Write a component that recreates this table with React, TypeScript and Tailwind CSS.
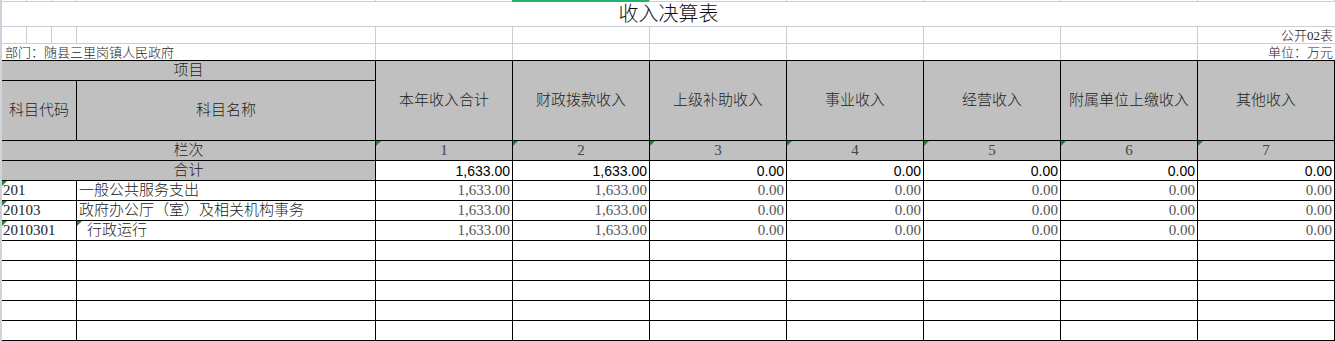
import React from "react";

const GRID = "border-[#c8cdd8]";
const FONT = "font-['Liberation_Serif','Noto_Sans_CJK_SC',serif]";
const NUM7 = [0, 1, 2, 3, 4, 5, 6];

function Tri() {
  return (
    <svg className="absolute left-0 top-0" width="5" height="5" viewBox="0 0 5 5">
      <polygon points="0,0 5,0 0,5" fill="#1f8a2a" />
    </svg>
  );
}

const headers = [
  "本年收入合计",
  "财政拨款收入",
  "上级补助收入",
  "事业收入",
  "经营收入",
  "附属单位上缴收入",
  "其他收入",
];

const totals = ["1,633.00", "1,633.00", "0.00", "0.00", "0.00", "0.00", "0.00"];

const rows: { code: string; name: string; indent?: boolean; triName?: boolean; vals: string[] }[] = [
  { code: "201", name: "一般公共服务支出", vals: totals },
  { code: "20103", name: "政府办公厅（室）及相关机构事务", vals: totals },
  { code: "2010301", name: "行政运行", indent: true, triName: true, vals: totals },
];

export default function App() {
  return (
    <div className={`w-[1335px] h-[341px] overflow-hidden bg-white border-l-2 border-[#cdd2dc] ${FONT} font-light text-[#1e1e1e]`}>
      {/* sliver row */}
      <div className={`relative flex h-[2px] border-b ${GRID}`}>
        <div className={`w-[25px] shrink-0 border-r ${GRID}`} />
        <div className={`w-[25px] shrink-0 border-r ${GRID}`} />
        <div className={`w-[25px] shrink-0 border-r ${GRID}`} />
        <div className={`w-[299px] shrink-0 border-r ${GRID}`} />
        {NUM7.map((i) => (
          <div key={i} className={`w-[137px] shrink-0 border-r ${GRID}`} />
        ))}
        <div className="absolute left-[510px] top-0 h-[2px] w-[137px] bg-[#21b36f]" />
      </div>
      {/* title */}
      <div className={`flex h-[25px] items-center justify-center border-b ${GRID} text-[20px] leading-none text-[#111]`}>
        <span>收入决算表</span>
      </div>
      {/* 公开02表 row */}
      <div className={`flex h-[17px] border-b ${GRID}`}>
        <div className={`w-[25px] shrink-0 border-r ${GRID}`} />
        <div className={`w-[25px] shrink-0 border-r ${GRID}`} />
        <div className={`w-[25px] shrink-0 border-r ${GRID}`} />
        <div className={`w-[299px] shrink-0 border-r ${GRID}`} />
        {NUM7.slice(0, 6).map((i) => (
          <div key={i} className={`w-[137px] shrink-0 border-r ${GRID}`} />
        ))}
        <div className="flex w-[137px] shrink-0 items-center justify-end pr-[2px] text-[13px] leading-none">
          公开02表
        </div>
      </div>
      {/* 部门 row */}
      <div className="flex h-[16px]">
        <div className={`flex w-[374px] shrink-0 items-center border-r ${GRID} pl-[3px] text-[13px] leading-none`}>
          部门：随县三里岗镇人民政府
        </div>
        {NUM7.slice(0, 6).map((i) => (
          <div key={i} className={`w-[137px] shrink-0 border-r ${GRID}`} />
        ))}
        <div className="flex w-[137px] shrink-0 items-center justify-end pr-[2px] text-[13px] leading-none">
          单位：万元
        </div>
      </div>
      {/* header */}
      <div className="flex h-[81px] border-y border-black bg-[#c0c0c0] text-[15px] leading-none text-[#222]">
        <div className="flex w-[374px] shrink-0 flex-col border-r border-black">
          <div className="flex h-[20px] items-center justify-center border-b border-black">项目</div>
          <div className="flex flex-1">
            <div className="flex w-[75px] shrink-0 items-center justify-center border-r border-black">
              科目代码
            </div>
            <div className="flex flex-1 items-center justify-center">科目名称</div>
          </div>
        </div>
        {headers.map((h) => (
          <div key={h} className="flex w-[137px] shrink-0 items-center justify-center border-r border-black">
            {h}
          </div>
        ))}
      </div>
      {/* 栏次 */}
      <div className="flex h-[20px] border-b border-black bg-[#c0c0c0] text-[15px] leading-none">
        <div className="flex w-[374px] shrink-0 items-center justify-center border-r border-black text-[#222]">
          栏次
        </div>
        {NUM7.map((i) => (
          <div
            key={i}
            className="relative flex w-[137px] shrink-0 items-center justify-center border-r border-black text-[#444]"
          >
            <Tri />
            {i + 1}
          </div>
        ))}
      </div>
      {/* 合计 */}
      <div className="flex h-[20px] border-b border-black text-[15px] leading-none">
        <div className="flex w-[374px] shrink-0 items-center justify-center border-r border-black bg-[#c0c0c0] text-[#222]">
          合计
        </div>
        {totals.map((v, i) => (
          <div
            key={i}
            className="flex w-[137px] shrink-0 items-center justify-end border-r border-black pr-[2px] font-['Liberation_Sans',sans-serif] font-normal text-[14px] text-black"
          >
            {v}
          </div>
        ))}
      </div>
      {/* data rows */}
      {rows.map((r) => (
        <div key={r.code} className="flex h-[20px] border-b border-black text-[15px] leading-none">
          <div className="relative flex w-[75px] shrink-0 items-center border-r border-black pl-[1px] text-[#222]">
            <Tri />
            {r.code}
          </div>
          <div
            className={`relative flex w-[299px] shrink-0 items-center border-r border-black text-[#222] ${
              r.indent ? "pl-[10px]" : "pl-[2px]"
            }`}
          >
            {r.triName && <Tri />}
            {r.name}
          </div>
          {r.vals.map((v, i) => (
            <div
              key={i}
              className="flex w-[137px] shrink-0 items-center justify-end border-r border-black pr-[2px] text-[#555]"
            >
              {v}
            </div>
          ))}
        </div>
      ))}
      {[0, 1, 2, 3, 4].map((k) => (
        <div key={k} className="flex h-[20px] border-b border-black">
          <div className="w-[75px] shrink-0 border-r border-black" />
          <div className="w-[299px] shrink-0 border-r border-black" />
          {NUM7.map((i) => (
            <div key={i} className="w-[137px] shrink-0 border-r border-black" />
          ))}
        </div>
      ))}
    </div>
  );
}
